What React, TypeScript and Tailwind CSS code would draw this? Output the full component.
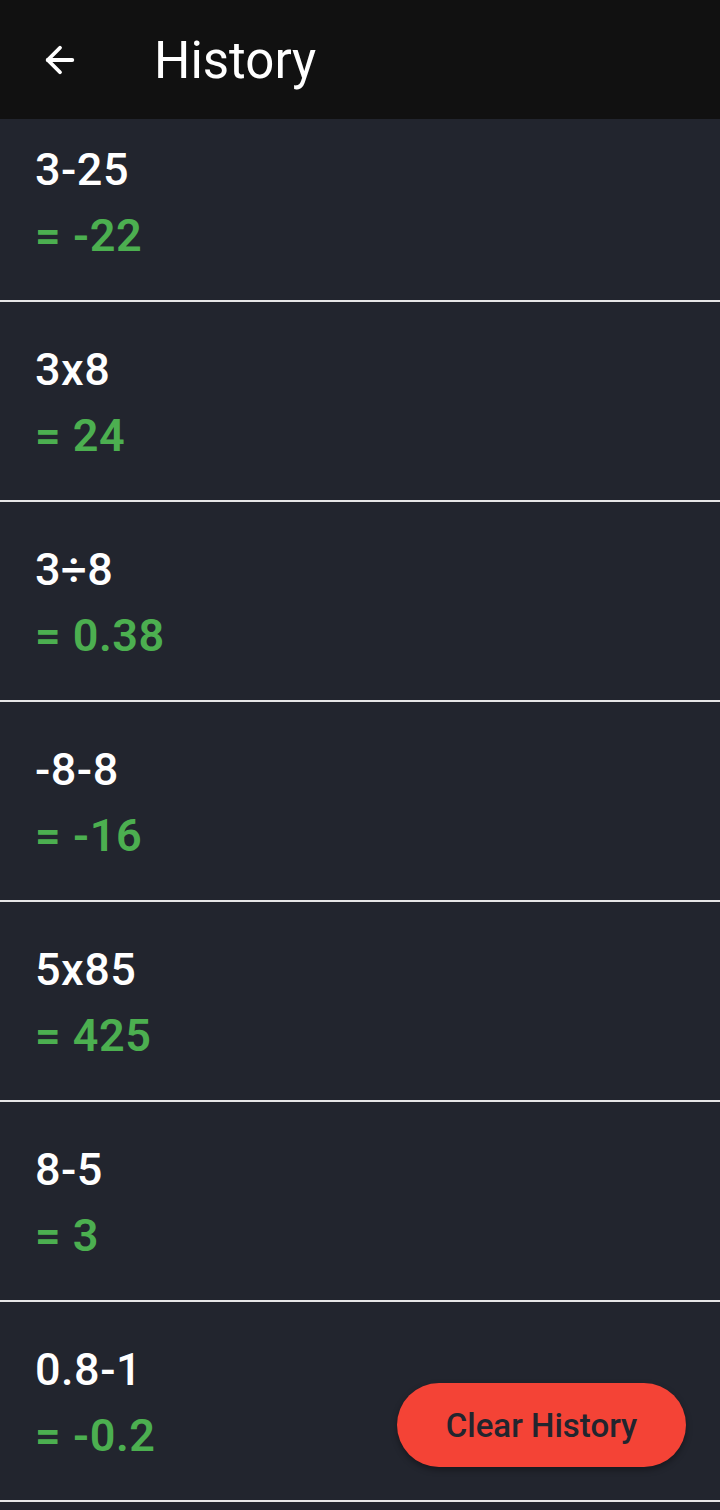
import { ArrowLeft } from "lucide-react";

const entries = [
  { expr: "3-25", result: "-22" },
  { expr: "3x8", result: "24" },
  { expr: "3÷8", result: "0.38" },
  { expr: "-8-8", result: "-16" },
  { expr: "5x85", result: "425" },
  { expr: "8-5", result: "3" },
  { expr: "0.8-1", result: "-0.2" },
];

const HistoryItem = ({ expr, result }: { expr: string; result: string }) => {
  return (
    <div className="h-[200px] flex flex-col justify-center pl-[35px] pt-[4px] border-b-2 border-[#e6e6e6]">
      <div className="text-white text-[45px] font-medium leading-[66px] tracking-[0.5px]">{expr}</div>
      <div className="text-[#4caf50] text-[45px] font-semibold leading-[66px] tracking-[0.5px]">= {result}</div>
    </div>
  );
};

export default function App() {
  return (
    <div
      className="relative w-[720px] h-[1510px] flex flex-col bg-[#22252e] overflow-hidden"
      style={{ fontFamily: "Roboto, 'Noto Sans', sans-serif" }}
    >
      <header className="h-[119px] shrink-0 flex items-center bg-[#111111] z-10">
        <div className="w-[120px] flex justify-center">
          <ArrowLeft className="text-white" size={42} strokeWidth={2.2} />
        </div>
        <h1 className="pl-[34px] pt-[4px] text-white text-[51px] font-normal">History</h1>
      </header>

      <div className="flex-1 overflow-hidden">
        <div className="-mt-[17px]">
          {entries.map((e, i) => (
            <HistoryItem key={i} expr={e.expr} result={e.result} />
          ))}
        </div>
      </div>

      <button className="absolute right-[34px] bottom-[43px] w-[289px] h-[84px] pt-[2px] rounded-full bg-[#f44336] text-[#22252e] text-[33px] font-medium shadow-[0_3px_6px_rgba(0,0,0,0.35)]">
        Clear History
      </button>
    </div>
  );
}
